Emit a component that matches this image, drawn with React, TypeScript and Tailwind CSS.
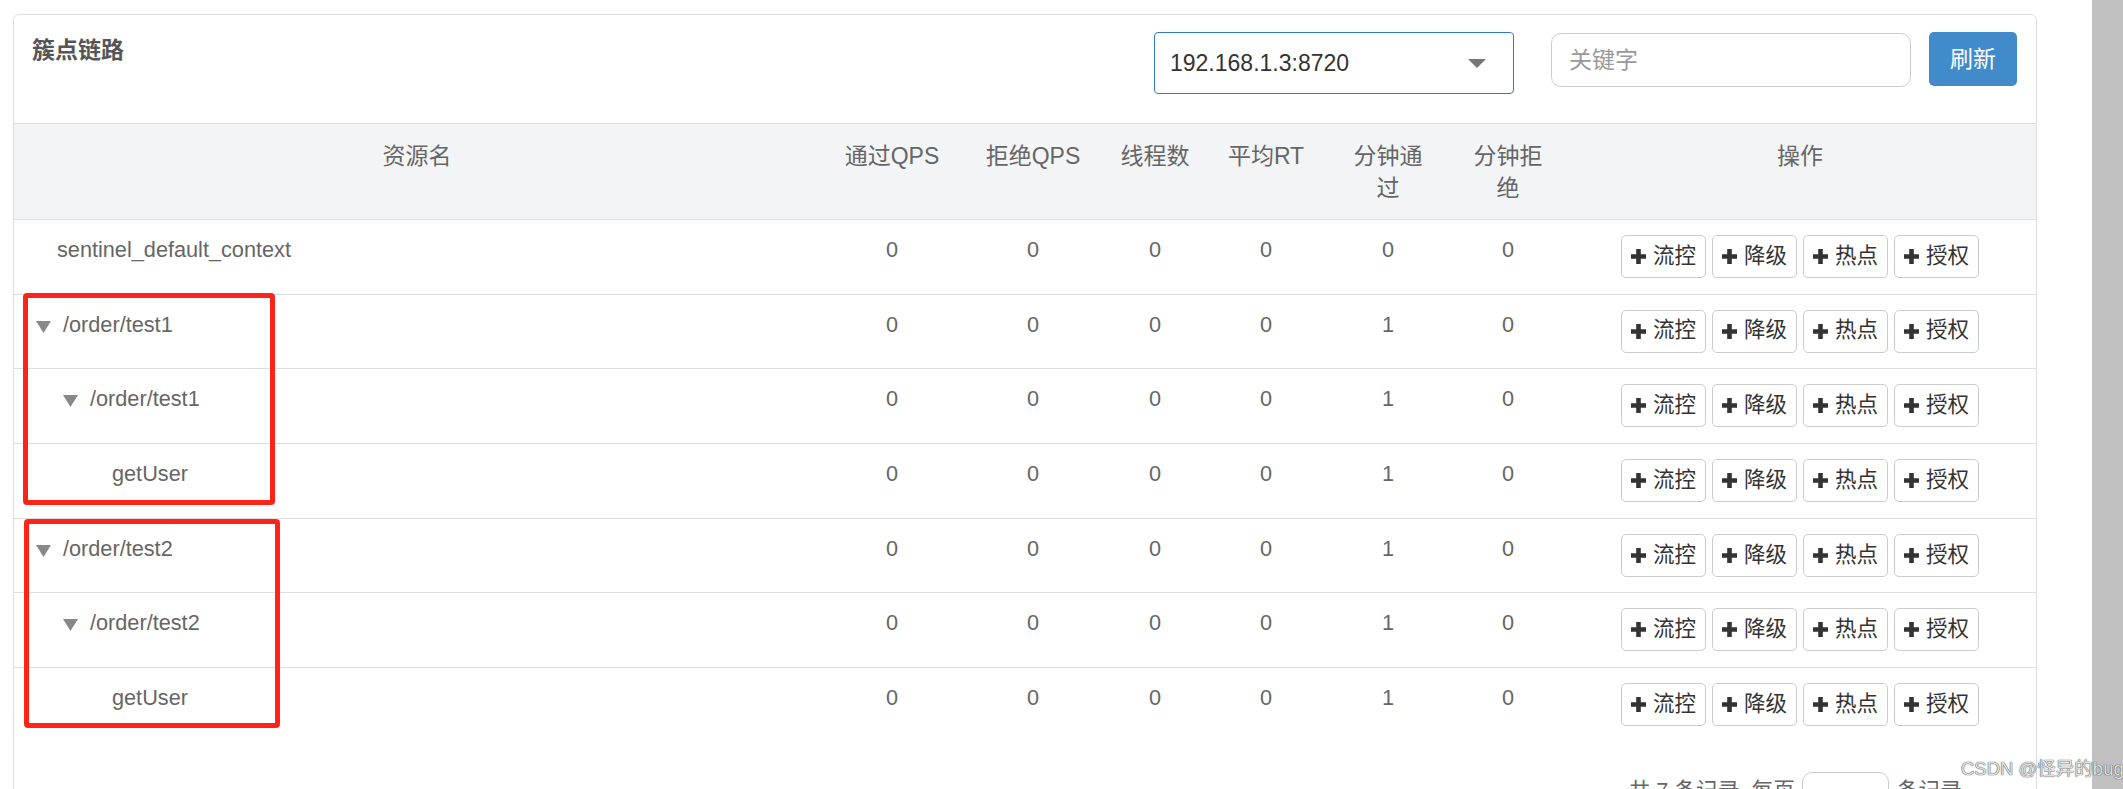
const columns = ['通过QPS', '拒绝QPS', '线程数', '平均RT'];

const rows = [
  { id: 1, name: 'sentinel_default_context', pad: 'pl-[43px]', toggle: false, stats: [0, 0, 0, 0, 0, 0] },
  { id: 2, name: '/order/test1', pad: 'pl-[22px]', toggle: true, stats: [0, 0, 0, 0, 1, 0] },
  { id: 3, name: '/order/test1', pad: 'pl-[49px]', toggle: true, stats: [0, 0, 0, 0, 1, 0] },
  { id: 4, name: 'getUser', pad: 'pl-[98px]', toggle: false, stats: [0, 0, 0, 0, 1, 0] },
  { id: 5, name: '/order/test2', pad: 'pl-[22px]', toggle: true, stats: [0, 0, 0, 0, 1, 0] },
  { id: 6, name: '/order/test2', pad: 'pl-[49px]', toggle: true, stats: [0, 0, 0, 0, 1, 0] },
  { id: 7, name: 'getUser', pad: 'pl-[98px]', toggle: false, stats: [0, 0, 0, 0, 1, 0] },
];

const actions = ['流控', '降级', '热点', '授权'];

const gridCols = 'grid grid-cols-[806px_144px_138px_106px_116px_128px_112px_1fr]';

const Plus = () => (
  <svg width="15" height="15" viewBox="0 0 15 15" className="shrink-0">
    <path d="M5.2 0h4.6v5.2H15v4.6H9.8V15H5.2V9.8H0V5.2h5.2z" fill="#333" />
  </svg>
);

const Caret = () => (
  <svg width="15" height="12" viewBox="0 0 15 12" className="mt-[12px] shrink-0">
    <path d="M0 0h15L7.5 12z" fill="#888" />
  </svg>
);

const App = () => {
  return (
    <div className="relative flex h-[789px] w-[2123px] overflow-hidden bg-white font-['Liberation_Sans','Noto_Sans_CJK_SC',sans-serif]">
      <div className="w-[2092px] pl-[13px] pr-[55px] pt-[14px]">
        <div className="rounded-t-[6px] border border-[#ddd] pb-[40px]">
          {/* toolbar */}
          <div className="flex h-[108px] items-start pl-[18px] pr-[19px]">
            <h3 className="mt-[19px] text-[23px] font-bold leading-[33px] text-[#555]">簇点链路</h3>
            <div className="flex-1" />
            <div className="mt-[17px] flex h-[62px] w-[360px] items-center justify-between rounded-[4px] border border-[#2f7cc4] pl-[15px] pr-[27px]">
              <span className="text-[23px] leading-none text-[#333]">192.168.1.3:8720</span>
              <svg width="18" height="9" viewBox="0 0 18 9">
                <path d="M0 0h18L9 9z" fill="#777" />
              </svg>
            </div>
            <div className="ml-[37px] mt-[18px] flex h-[54px] w-[360px] items-center rounded-[10px] border border-[#ccc] pl-[17px]">
              <span className="text-[23px] leading-none text-[#999]">关键字</span>
            </div>
            <button className="ml-[18px] mt-[17px] h-[54px] w-[88px] rounded-[5px] bg-[#428bca] text-[23px] leading-none text-white">
              刷新
            </button>
          </div>

          {/* table header */}
          <div className={`${gridCols} h-[97px] border-y border-[#ddd] bg-[#f3f4f6] text-center text-[23px] leading-[32px] text-[#666]`}>
            <div className="pt-[16px]">资源名</div>
            {columns.map((c) => (
              <div key={c} className="pt-[16px]">{c}</div>
            ))}
            <div className="pt-[16px]">分钟通<br />过</div>
            <div className="pt-[16px]">分钟拒<br />绝</div>
            <div className="pt-[16px]">操作</div>
          </div>

          {/* table body */}
          {rows.map((row, i) => (
            <div
              key={row.id}
              className={`${gridCols} h-[74.7px] text-[21.7px] leading-[31px] text-[#666] ${i < rows.length - 1 ? 'border-b border-[#ddd]' : ''}`}
            >
              <div className={`flex items-start pt-[14px] ${row.pad}`}>
                {row.toggle && <Caret />}
                <span className={row.toggle ? 'ml-[12px]' : ''}>{row.name}</span>
              </div>
              {row.stats.map((s, j) => (
                <div key={j} className="pt-[14px] text-center">{s}</div>
              ))}
              <div className="flex justify-center gap-[6px] pt-[15px]">
                {actions.map((a) => (
                  <button
                    key={a}
                    className="flex h-[43px] items-center rounded-[5px] border border-[#ccc] bg-white pl-[9px] pr-[9px] text-[21.5px] leading-none text-[#333]"
                  >
                    <Plus />
                    <span className="ml-[7px]">{a}</span>
                  </button>
                ))}
              </div>
            </div>
          ))}

          {/* pagination */}
          <div className="flex items-start justify-end pr-[74px] pt-[29px] text-[21.7px] leading-[31px] text-[#666]">
            <span className="mt-[3px]">共 7 条记录, 每页</span>
            <div className="ml-[7px] flex h-[50px] w-[87px] items-center rounded-[10px] border border-[#ccc] pl-[25px] text-[#555]">
              10
            </div>
            <span className="ml-[8px] mt-[3px]">条记录</span>
          </div>
        </div>
      </div>

      {/* scrollbar */}
      <div className="h-full w-[31px] bg-[#c1c1c1]" />

      {/* annotation boxes */}
      <div className="absolute left-[23px] top-[293px] h-[212px] w-[252px] rounded-[4px] border-[5px] border-[#ff2418]" />
      <div className="absolute left-[24px] top-[519px] h-[209px] w-[256px] rounded-[4px] border-[5px] border-[#ff2418]" />

      {/* watermark */}
      <div className="absolute left-[1961px] top-[758px] z-10 whitespace-nowrap text-[18.5px] leading-[22px] text-[#dedede] [text-shadow:0_0_1px_#555,0_0_1px_#555]">
        CSDN @怪异的bug
      </div>
    </div>
  );
};

export default App;
